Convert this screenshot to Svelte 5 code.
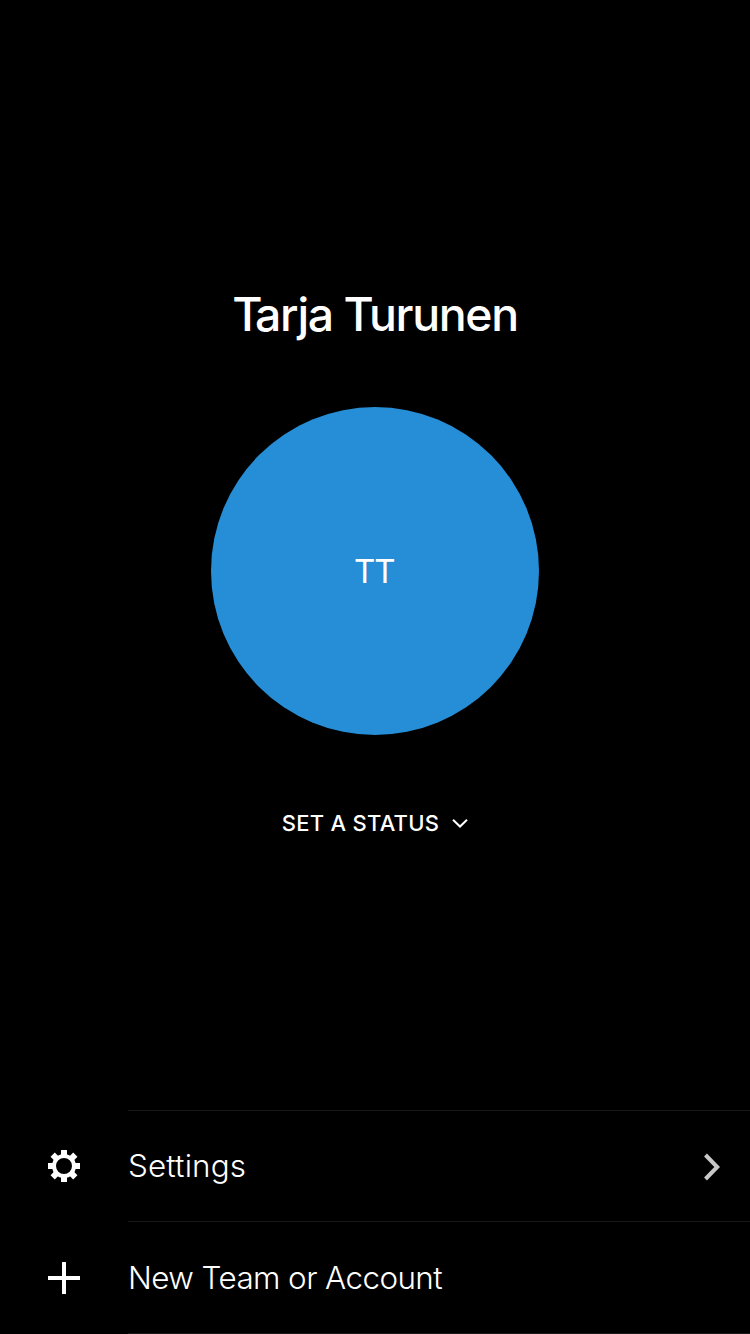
<script>
  const initials = 'TT';
  const teeth = [0, 45, 90, 135, 180, 225, 270, 315];
</script>

<main>
  <section class="profile">
    <h1><span class="cap">T</span>arja Turunen</h1>
    <div class="avatar"><span>{initials}</span></div>
    <button class="status">
      <span>SET A STATUS</span>
      <svg width="18" height="12" viewBox="0 0 18 12" fill="none" stroke="#fff" stroke-width="2">
        <path d="M2 2.7 9 9.5 16 2.7" />
      </svg>
    </button>
  </section>
  <nav>
    <button class="row">
      <span class="icon">
        <svg width="32" height="32" viewBox="-16 -16 32 32">
          <circle r="10" fill="none" stroke="#fff" stroke-width="4" />
          {#each teeth as angle}
            <rect x="-3" y="-16" width="6" height="6.5" fill="#fff" transform="rotate({angle})" />
          {/each}
        </svg>
      </span>
      <span class="body">
        <span class="label settings">Settings</span>
        <svg class="chevron" width="20" height="30" viewBox="0 0 20 30" fill="none" stroke="#c8c8c8" stroke-width="4">
          <path d="M3.5 3 15.2 15 3.5 27" />
        </svg>
      </span>
    </button>
    <button class="row second">
      <span class="icon">
        <svg width="32" height="32" viewBox="0 0 32 32">
          <path d="M14 0h4v14h14v4H18v14h-4V18H0v-4h14z" fill="#fff" />
        </svg>
      </span>
      <span class="body"><span class="label account">New Team or Account</span></span>
    </button>
  </nav>
</main>

<style>
  :global(body) {
    background: #000;
  }
  main {
    width: 750px;
    height: 1334px;
    overflow: hidden;
    display: flex;
    flex-direction: column;
    justify-content: space-between;
    background: #000;
    color: #fff;
    font-family: Inter, 'Liberation Sans', sans-serif;
  }
  button {
    border: 0;
    padding: 0;
    background: none;
    color: inherit;
    font: inherit;
    text-align: left;
  }
  svg {
    display: block;
    flex: none;
  }
  .profile {
    display: flex;
    flex-direction: column;
    align-items: center;
    padding-top: 286px;
  }
  h1 {
    margin: 0;
    font-size: 46.4px;
    line-height: 56px;
    font-weight: 500;
    letter-spacing: -1.35px;
    word-spacing: -0.2px;
    white-space: nowrap;
  }
  .cap {
    letter-spacing: -7.4px;
  }
  .avatar {
    width: 328px;
    height: 328px;
    margin-top: 65px;
    border-radius: 50%;
    background: #268ed6;
    display: flex;
    align-items: center;
    justify-content: center;
    font-size: 33px;
    line-height: 40px;
    letter-spacing: -1px;
  }
  .avatar span {
    padding-right: 1.5px;
  }
  .status {
    display: flex;
    align-items: center;
    gap: 12px;
    margin-top: 74px;
    padding-left: 1px;
    font-size: 22px;
    line-height: 28px;
    font-weight: 500;
    letter-spacing: 0.25px;
  }
  .row {
    display: flex;
    width: 750px;
    height: 111px;
  }
  .second {
    height: 113px;
  }
  .icon {
    width: 128px;
    display: flex;
    align-items: center;
    padding-left: 48px;
    box-sizing: border-box;
  }
  .body {
    flex: 1;
    display: flex;
    align-items: center;
    justify-content: space-between;
    padding: 1px 28px 0 0;
    border-top: 1px solid #181818;
  }
  .second .body {
    border-bottom: 1px solid #181818;
  }
  .label {
    font-size: 31.4px;
    line-height: 40px;
    font-weight: 300;
    white-space: nowrap;
  }
  .settings {
    padding-bottom: 1px;
    letter-spacing: 0.15px;
  }
  .account {
    letter-spacing: -0.58px;
  }
</style>
